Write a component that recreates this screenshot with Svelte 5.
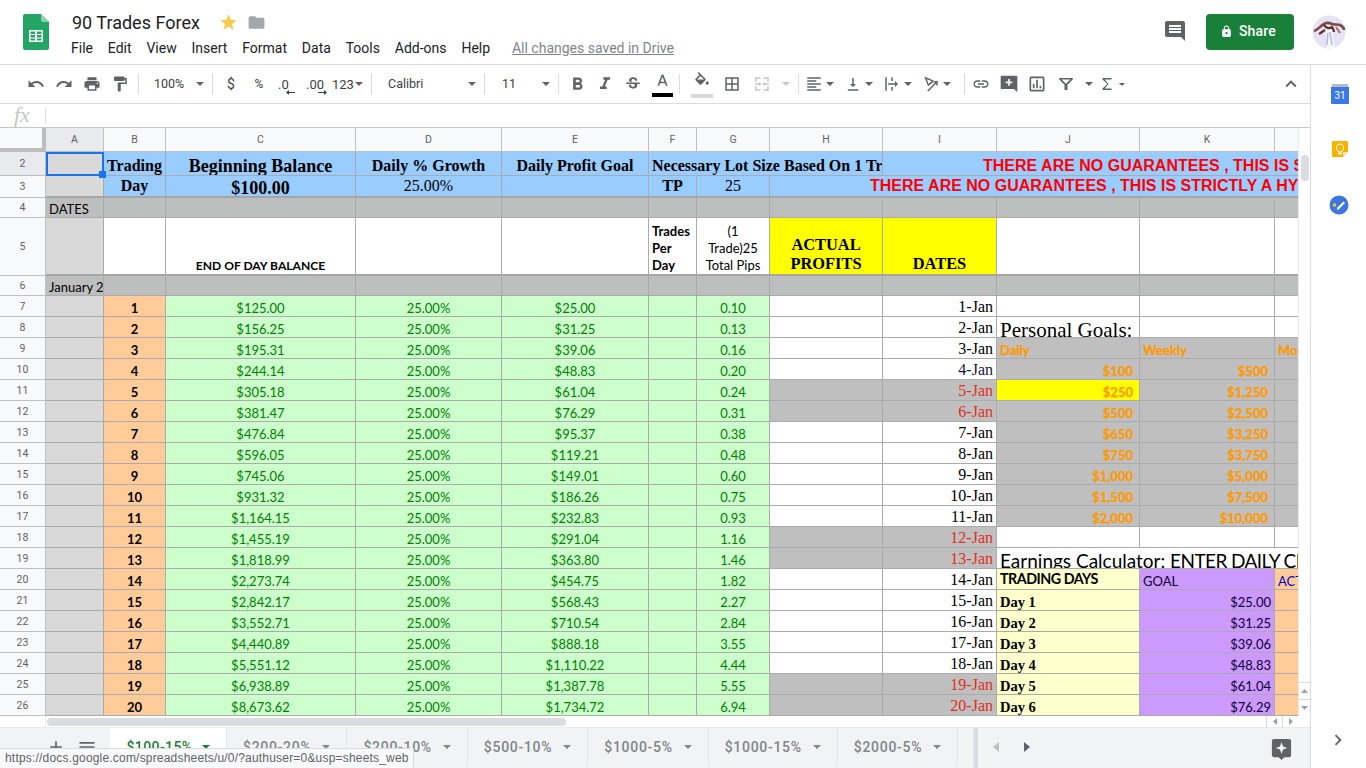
<script>
  const columns = ["A", "B", "C", "D", "E", "F", "G", "H", "I", "J", "K", ""];
  const profits = ["25.00", "31.25", "39.06", "48.83", "61.04", "76.29", "95.37", "119.21", "149.01", "186.26", "232.83", "291.04", "363.80", "454.75", "568.43", "710.54", "888.18", "1,110.22", "1,387.78", "1,734.72"];
  const balances = ["125.00", "156.25", "195.31", "244.14", "305.18", "381.47", "476.84", "596.05", "745.06", "931.32", "1,164.15", "1,455.19", "1,818.99", "2,273.74", "2,842.17", "3,552.71", "4,440.89", "5,551.12", "6,938.89", "8,673.62"];
  const lots = ["0.10", "0.13", "0.16", "0.20", "0.24", "0.31", "0.38", "0.48", "0.60", "0.75", "0.93", "1.16", "1.46", "1.82", "2.27", "2.84", "3.55", "4.44", "5.55", "6.94"];
  const weekends = [5, 6, 12, 13, 19, 20];

  const goals = [
    ["$100", "$500"], ["$250", "$1,250"], ["$500", "$2,500"], ["$650", "$3,250"],
    ["$750", "$3,750"], ["$1,000", "$5,000"], ["$1,500", "$7,500"], ["$2,000", "$10,000"]
  ];

  // right hand block of the sheet, one entry per row starting at row 7
  const side = [
    [{}, {}, {}],
    [{ text: "Personal Goals:", cls: "big" }, {}, {}],
    [{ text: "Daily", cls: "goal-head" }, { text: "Weekly", cls: "goal-head" }, { text: "Mo", cls: "goal-head" }],
    ...goals.map((g, i) => [
      { text: g[0], cls: i === 1 ? "goal-val hilite" : "goal-val" },
      { text: g[1], cls: "goal-val" },
      { cls: "gray" }
    ]),
    [{}, {}, {}],
    [{ text: "Earnings Calculator: ", caps: "ENTER DAILY CLOSING BALANCE", cls: "earn", span: 3 }],
    [{ text: "TRADING DAYS", cls: "days-head" }, { text: "GOAL", cls: "purple" }, { text: "ACT", cls: "orange act" }],
    ...profits.slice(0, 6).map((p, i) => [
      { text: "Day " + (i + 1), cls: "day" },
      { text: "$" + p, cls: "purple right" },
      { cls: "orange" }
    ])
  ];

  const days = profits.map((p, i) => ({
    n: i + 1,
    row: i + 7,
    balance: "$" + balances[i],
    profit: "$" + p,
    lot: lots[i],
    off: weekends.includes(i + 1),
    side: side[i]
  }));

  const menus = ["File", "Edit", "View", "Insert", "Format", "Data", "Tools", "Add-ons", "Help"];
  const tabs = ["$200-20%", "$200-10%", "$500-10%", "$1000-5%", "$1000-15%", "$2000-5%"];

  const paths = {
    undo: "M12.5 8c-2.65 0-5.05.99-6.9 2.6L2 7v9h9l-3.62-3.62c1.39-1.16 3.16-1.88 5.12-1.88 3.54 0 6.55 2.31 7.6 5.5l2.37-.78C21.08 11.03 17.15 8 12.5 8z",
    redo: "M18.4 10.6C16.55 8.99 14.15 8 11.5 8c-4.65 0-8.58 3.03-9.96 7.22L3.9 16c1.05-3.19 4.05-5.5 7.6-5.5 1.95 0 3.73.72 5.12 1.88L13 16h9V7l-3.6 3.6z",
    print: "M19 8H5c-1.66 0-3 1.34-3 3v6h4v4h12v-4h4v-6c0-1.66-1.34-3-3-3zm-3 11H8v-5h8v5zm3-7c-.55 0-1-.45-1-1s.45-1 1-1 1 .45 1 1-.45 1-1 1zm-1-9H6v4h12V3z",
    paint: "M18 4V3c0-.55-.45-1-1-1H5c-.55 0-1 .45-1 1v4c0 .55.45 1 1 1h12c.55 0 1-.45 1-1V6h1v4H9v11c0 .55.45 1 1 1h2c.55 0 1-.45 1-1v-9h8V4h-3z",
    bold: "M15.6 10.79c.97-.67 1.65-1.77 1.65-2.79 0-2.26-1.75-4-4-4H7v14h7.04c2.09 0 3.71-1.7 3.71-3.79 0-1.52-.86-2.82-2.15-3.42zM10 6.5h3c.83 0 1.5.67 1.5 1.5s-.67 1.5-1.5 1.5h-3v-3zm3.5 9H10v-3h3.5c.83 0 1.5.67 1.5 1.5s-.67 1.5-1.5 1.5z",
    italic: "M10 4v3h2.21l-3.42 8H6v3h8v-3h-2.21l3.42-8H18V4z",
    strike: "M7.24 8.75c-.26-.48-.39-1.03-.39-1.67 0-.61.13-1.16.4-1.67.26-.5.63-.93 1.11-1.29.48-.35 1.05-.63 1.7-.83.66-.19 1.39-.29 2.18-.29.81 0 1.54.11 2.21.34.66.22 1.23.54 1.69.94.47.4.83.88 1.08 1.43.25.55.38 1.15.38 1.81h-3.01c0-.31-.05-.59-.15-.85-.09-.27-.24-.49-.44-.68-.2-.19-.45-.33-.75-.44-.3-.1-.66-.16-1.06-.16-.39 0-.74.04-1.03.13-.29.09-.53.21-.72.36-.19.16-.34.34-.44.55-.1.21-.15.43-.15.66 0 .48.25.88.74 1.21.38.25.77.48 1.41.7H7.39c-.05-.08-.11-.17-.15-.25zM21 12v-2H3v2h9.62c.18.07.4.14.55.2.37.17.66.34.87.51.21.17.35.36.43.57.07.2.11.43.11.69 0 .23-.05.45-.14.66-.09.2-.23.38-.42.53-.19.15-.42.26-.71.35-.29.08-.63.13-1.01.13-.43 0-.83-.04-1.18-.13s-.66-.23-.91-.42c-.25-.19-.45-.44-.59-.75-.14-.31-.25-.76-.25-1.21H6.4c0 .55.08 1.13.24 1.58.16.45.37.85.65 1.21.28.35.6.66.98.92.37.26.78.48 1.22.65.44.17.9.3 1.38.39.48.08.96.13 1.44.13.8 0 1.53-.09 2.18-.28s1.21-.45 1.67-.79c.46-.34.82-.77 1.07-1.27s.38-1.07.38-1.71c0-.6-.1-1.14-.31-1.61-.05-.11-.11-.23-.17-.33H21z",
    color: "M11 2L5.500 16h2.250l1.120-3h6.250l1.120 3h2.250L13 2h-2zm-1.380 9L12 4.670 14.380 11H9.620z",
    fill: "M16.56 8.94L7.62 0 6.21 1.41l2.38 2.38-5.15 5.15c-.59.59-.59 1.54 0 2.12l5.5 5.5c.29.29.68.44 1.06.44s.77-.15 1.06-.44l5.5-5.5c.59-.58.59-1.53 0-2.12zM5.21 10L10 5.21 14.79 10H5.21zM19 11.5s-2 2.17-2 3.5c0 1.1.9 2 2 2s2-.9 2-2c0-1.33-2-3.5-2-3.5z",
    borders: "M3 3v18h18V3H3zm8 16H5v-6h6v6zm0-8H5V5h6v6zm8 8h-6v-6h6v6zm0-8h-6V5h6v6z",
    merge: "M3 3h7v2H5v4H3zM14 3h7v6h-2V5h-5zM3 15h2v4h5v2H3zM19 15h2v6h-7v-2h5zM3 11h5V9l3 3-3 3v-2H3zM21 13h-5v2l-3-3 3-3v2h5z",
    align: "M3 3h18v2H3zM3 7h12v2H3zM3 11h18v2H3zM3 15h12v2H3zM3 19h18v2H3z",
    valign: "M16 12h-3V4h-2v8H8l4 4zM5 19v2h14v-2z",
    wrap: "M3 3h2v18H3zM11 3h2v5h-2zM11 16h2v5h-2zM7 11h9V8l4 4-4 4v-3H7z",
    rotate: "M3 2l14 6-9 7zM6.500 5.800l2.200 5.800 4.500-3.300zM21 8v6h-2v-2.600L8.400 22 7 20.600 17.600 10H15V8z",
    link: "M3.9 12c0-1.71 1.39-3.1 3.1-3.1h4V7H7c-2.76 0-5 2.24-5 5s2.24 5 5 5h4v-1.9H7c-1.71 0-3.1-1.39-3.1-3.1zM8 13h8v-2H8v2zm9-6h-4v1.9h4c1.71 0 3.1 1.39 3.1 3.1s-1.39 3.1-3.1 3.1h-4V17h4c2.76 0 5-2.24 5-5s-2.24-5-5-5z",
    addcomment: "M3 2h18a1 1 0 0 1 1 1v19l-4-4H3a1 1 0 0 1-1-1V3a1 1 0 0 1 1-1zm8 4v3H8v2h3v3h2v-3h3V9h-3V6z",
    chart: "M19 3H5c-1.1 0-2 .9-2 2v14c0 1.1.9 2 2 2h14c1.1 0 2-.9 2-2V5c0-1.1-.9-2-2-2zm0 16H5V5h14v14zM7 12h2v5H7zm4-5h2v10h-2zm4 7h2v3h-2z",
    filter: "M3 4h18v2l-7 7v7h-4v-7L3 6zm3.200 2l5.800 5.800L17.800 6z",
    sigma: "M18 4H6v2l6.500 6L6 18v2h12v-2H9l5-6-5-6h9z",
    up: "M12 8l-6 6 1.41 1.41L12 10.83l4.59 4.58L18 14z",
    chat: "M21.99 4c0-1.1-.89-2-1.99-2H4c-1.1 0-2 .9-2 2v12c0 1.1.9 2 2 2h14l4 4-.01-18zM18 14H6v-2h12v2zm0-3H6V9h12v2zm0-3H6V6h12v2z",
    lock: "M18 8h-1V6c0-2.76-2.24-5-5-5S7 3.24 7 6v2H6c-1.1 0-2 .9-2 2v10c0 1.1.9 2 2 2h12c1.1 0 2-.9 2-2V10c0-1.1-.9-2-2-2zm-6 9c-1.1 0-2-.9-2-2s.9-2 2-2 2 .9 2 2-.9 2-2 2zm3.1-9H8.9V6c0-1.71 1.39-3.1 3.1-3.1 1.71 0 3.1 1.39 3.1 3.1v2z",
    star: "M12 17.27L18.18 21l-1.64-7.03L22 9.24l-7.19-.61L12 2 9.19 8.63 2 9.24l5.46 4.73L5.82 21z",
    folder: "M10 4H4c-1.1 0-2 .9-2 2v12c0 1.1.9 2 2 2h16c1.1 0 2-.9 2-2V8c0-1.1-.9-2-2-2h-8l-2-2z",
    plus: "M19 13h-6v6h-2v-6H5v-2h6V5h2v6h6z",
    list: "M3 6h18v2H3zM3 11h18v2H3zM3 16h18v2H3z",
    right: "M10 6L8.59 7.41 13.17 12l-4.58 4.59L10 18l6-6z",
    explore: "M4 2h16c1.1 0 2 .9 2 2v15c0 1.1-.9 2-2 2h-5l-3 3-3-3H4c-1.1 0-2-.9-2-2V4c0-1.1.9-2 2-2zm8 3.500l-1.600 4.400L6 11.500l4.400 1.600 1.600 4.400 1.600-4.400 4.400-1.600-4.400-1.600z"
  };
</script>

{#snippet icon(name, size = 18)}
  <svg class="ico" width={size} height={size} viewBox="0 0 24 24"><path d={paths[name]} fill-rule="evenodd" /></svg>
{/snippet}

{#snippet caret()}
  <svg class="caret" width="8" height="4" viewBox="0 0 8 4"><path d="M0 0h8L4 4z" /></svg>
{/snippet}

<div class="app">
  <header class="top">
    <svg class="logo" width="26" height="36" viewBox="0 0 26 36">
      <path d="M2 0h16l8 8v26a2 2 0 0 1-2 2H2a2 2 0 0 1-2-2V2a2 2 0 0 1 2-2z" fill="#23a566" />
      <path d="M18 0l8 8h-6a2 2 0 0 1-2-2z" fill="#8ed1b1" />
      <path d="M6 16h14v12H6z M7.500 17.500v2.500h4.500v-2.500z M14 17.500v2.500h4.500v-2.500z M7.500 21v2.500h4.500V21z M14 21v2.500h4.500V21z M7.500 24.500v2h4.500v-2z M14 24.500v2h4.500v-2z" fill="#fff" fill-rule="evenodd" />
    </svg>
    <div class="titles">
      <div class="title-row">
        <span class="doc-title">90 Trades Forex</span>
        <span class="star">{@render icon("star", 19)}</span>
        <span class="folder">{@render icon("folder", 19)}</span>
      </div>
      <nav class="menus">
        {#each menus as m}<span>{m}</span>{/each}
        <a class="saved" href="#saved">All changes saved in Drive</a>
      </nav>
    </div>
    <div class="top-right">
      <span class="chat">{@render icon("chat", 24)}</span>
      <button class="share" type="button">{@render icon("lock", 13)}<span>Share</span></button>
      <svg class="avatar" width="34" height="34" viewBox="0 0 34 34">
        <circle cx="17" cy="17" r="16.5" fill="#e4e2f3" />
        <path d="M14 15l6-1 3 19-8 0z" fill="#f6f6fc" />
        <path d="M18 17l2 13M16 18l-1 12" stroke="#b5b8d8" stroke-width="1.500" fill="none" />
        <path d="M2 16c4-1 6-5 10-7 3-2 6-1 8 0 3 1 5 0 8 1 2 1 4 3 4 5" stroke="#7e4a42" stroke-width="2.600" fill="none" />
        <path d="M12 10c2 3 5 4 8 2 1 2 2 3 2 5M7 19c2-1 4-3 6-4" stroke="#5f2f2a" stroke-width="2.200" fill="none" />
        <path d="M24 12l4 6" stroke="#a3716a" stroke-width="2" fill="none" />
      </svg>
    </div>
  </header>

  <div class="body">
    <div class="work">
      <div class="toolbar">
        <span class="btn">{@render icon("undo")}</span>
        <span class="btn">{@render icon("redo")}</span>
        <span class="btn">{@render icon("print")}</span>
        <span class="btn">{@render icon("paint")}</span>
        <i class="sep"></i>
        <span class="select zoom-sel"><span>100%</span>{@render caret()}</span>
        <i class="sep"></i>
        <span class="btn txt">$</span>
        <span class="btn txt small">%</span>
        <span class="btn txt dec dec-a">.0<svg width="9" height="5" viewBox="0 0 9 5"><path d="M9 2H3V0L0 2.500 3 5V3h6z" /></svg></span>
        <span class="btn txt dec dec-b">.00<svg width="9" height="5" viewBox="0 0 9 5"><path d="M0 2h6V0l3 2.500L6 5V3H0z" /></svg></span>
        <span class="btn txt num">123{@render caret()}</span>
        <i class="sep"></i>
        <span class="select font-sel"><span>Calibri</span>{@render caret()}</span>
        <i class="sep"></i>
        <span class="select size-sel"><span>11</span>{@render caret()}</span>
        <i class="sep"></i>
        <span class="btn">{@render icon("bold", 21)}</span>
        <span class="btn">{@render icon("italic", 20)}</span>
        <span class="btn">{@render icon("strike", 18)}</span>
        <span class="btn color">{@render icon("color", 19)}<b></b></span>
        <i class="sep sep-fill"></i>
        <span class="btn wide fill">{@render icon("fill", 18)}<b></b></span>
        <span class="btn wide">{@render icon("borders")}</span>
        <span class="btn wide off">{@render icon("merge")}</span>
        <span class="tiny off">{@render caret()}</span>
        <i class="sep"></i>
        <span class="group">{@render icon("align")}{@render caret()}</span>
        <span class="group">{@render icon("valign")}{@render caret()}</span>
        <span class="group">{@render icon("wrap")}{@render caret()}</span>
        <span class="group">{@render icon("rotate")}{@render caret()}</span>
        <i class="sep sep-link"></i>
        <span class="btn">{@render icon("link")}</span>
        <span class="btn">{@render icon("addcomment", 20)}</span>
        <span class="btn">{@render icon("chart", 20)}</span>
        <span class="btn filter">{@render icon("filter")}</span>
        <span class="tiny">{@render caret()}</span>
        <span class="group sigma">{@render icon("sigma")}<svg class="caret" width="6" height="3" viewBox="0 0 8 4"><path d="M0 0h8L4 4z" /></svg></span>
        <span class="btn collapse">{@render icon("up", 22)}</span>
      </div>

      <div class="fx-bar"><em>fx</em><i></i></div>

      <div class="sheet-top">
        <div class="viewport">
          <div class="grid">
            <div class="corner"></div>
            {#each columns as c, i}
              <div class="col-head" class:picked={i === 0}>{c}</div>
            {/each}

            <div class="row-head picked">2</div>
            <div class="cell col-a selected"><b class="handle"></b></div>
            <div class="cell blue head-16 center">Trading</div>
            <div class="cell blue head-18 center">Beginning Balance</div>
            <div class="cell blue head-16 center">Daily % Growth</div>
            <div class="cell blue head-16 center">Daily Profit Goal</div>
            <div class="cell blue head-16 lot-title span-3">Necessary Lot Size Based On 1 Trade</div>
            <div class="cell blue warn warn-a span-4">THERE ARE NO GUARANTEES , THIS IS STRICTLY A HYPOTHETICAL</div>

            <div class="row-head">3</div>
            <div class="cell col-a thick"></div>
            <div class="cell blue head-16 center thick r3">Day</div>
            <div class="cell blue head-18 center thick balance">$100.00</div>
            <div class="cell blue plain-16 center thick r3">25.00%</div>
            <div class="cell blue thick"></div>
            <div class="cell blue head-16 center thick r3">TP</div>
            <div class="cell blue plain-16 center thick r3">25</div>
            <div class="cell blue warn warn-b span-5 thick">THERE ARE NO GUARANTEES , THIS IS STRICTLY A HYPOTHETICAL</div>

            <div class="row-head">4</div>
            <div class="cell band calibri">DATES</div>
            {#each columns.slice(1) as _}<div class="cell band"></div>{/each}

            <div class="row-head">5</div>
            <div class="cell col-a thick"></div>
            <div class="cell thick"></div>
            <div class="cell thick calibri strong center eod">END OF DAY BALANCE</div>
            <div class="cell thick"></div>
            <div class="cell thick"></div>
            <div class="cell thick calibri strong wrap">Trades<br />Per<br />Day</div>
            <div class="cell thick calibri wrap center">(1<br />Trade)25<br />Total Pips</div>
            <div class="cell thick yellow head-yellow center wrap-y">ACTUAL<br />PROFITS</div>
            <div class="cell thick yellow head-yellow center">DATES</div>
            <div class="cell thick"></div>
            <div class="cell thick"></div>
            <div class="cell thick"></div>

            <div class="row-head">6</div>
            <div class="cell band calibri">January 2</div>
            {#each columns.slice(1) as _}<div class="cell band"></div>{/each}

            {#each days as d}
              <div class="row-head">{d.row}</div>
              <div class="cell col-a"></div>
              <div class="cell orange calibri strong center">{d.n}</div>
              <div class="cell green calibri center">{d.balance}</div>
              <div class="cell green calibri center">25.00%</div>
              <div class="cell green calibri center">{d.profit}</div>
              <div class="cell green"></div>
              <div class="cell green calibri center">{d.lot}</div>
              <div class="cell" class:gray={d.off}></div>
              <div class="cell date" class:gray={d.off} class:weekend={d.off} class:navy={d.n === 4}>{d.n}-Jan</div>
              {#each d.side as s}
                <div class="cell {s.cls || ''}" class:span-3={s.span === 3}>{s.text || ""}{#if s.caps}<span class="caps">{s.caps}</span>{/if}</div>
              {/each}
            {/each}
          </div>
        </div>
        <div class="vscroll">
          <div class="v-thumb"></div>
          <div class="v-arrows">
            <span><svg width="7" height="4" viewBox="0 0 7 4"><path d="M3.500 0L7 4H0z" /></svg></span>
            <span><svg width="7" height="4" viewBox="0 0 7 4"><path d="M0 0h7L3.500 4z" /></svg></span>
          </div>
        </div>
      </div>

      <div class="hscroll">
        <div class="h-side"></div>
        <div class="h-thumb"></div>
        <div class="h-arrows">
          <span><svg width="4" height="7" viewBox="0 0 4 7"><path d="M4 0v7L0 3.500z" /></svg></span>
          <span><svg width="4" height="7" viewBox="0 0 4 7"><path d="M0 0v7l4-3.500z" /></svg></span>
        </div>
      </div>

      <div class="tabs">
        <span class="tab-tool add">{@render icon("plus", 20)}</span>
        <span class="tab-tool list">{@render icon("list", 20)}</span>
        <div class="tab active"><span>$100-15%</span>{@render caret()}</div>
        {#each tabs as t}
          <div class="tab"><span>{t}</span>{@render caret()}</div>
        {/each}
        <div class="tab stub"></div>
        <div class="tab-edge"></div>
        <svg class="nav-l" width="6" height="10" viewBox="0 0 6 10"><path d="M6 0v10L0 5z" /></svg>
        <svg class="nav-r" width="6" height="10" viewBox="0 0 6 10"><path d="M0 0v10l6-5z" /></svg>
        <span class="explore">{@render icon("explore", 23)}</span>
        <div class="status">https://docs.google.com/spreadsheets/u/0/?authuser=0&amp;usp=sheets_web</div>
      </div>
    </div>

    <aside class="side">
      <svg width="18" height="20" viewBox="0 0 18 20" class="side-cal">
        <path d="M1 0h16v3H1z" fill="#b9bcc2" />
        <path d="M0 3h18v16a1 1 0 0 1-1 1H1a1 1 0 0 1-1-1z" fill="#3b78e7" />
        <text x="9" y="15" text-anchor="middle" class="cal-num">31</text>
      </svg>
      <svg width="16" height="16" viewBox="0 0 16 16" class="side-keep">
        <path d="M1 0h14a1 1 0 0 1 1 1v10l-5 5H1a1 1 0 0 1-1-1V1a1 1 0 0 1 1-1z" fill="#f5b400" />
        <path d="M16 11l-5 5v-5z" fill="#fbe3a1" />
        <path d="M8 3a3.600 3.600 0 0 0-2 6.600V11h4V9.600A3.600 3.600 0 0 0 8 3zM6.400 12h3.200v1H6.400z" fill="none" stroke="#fff" stroke-width="1" />
      </svg>
      <svg width="20" height="20" viewBox="0 0 20 20" class="side-tasks">
        <circle cx="10" cy="10" r="9.500" fill="#3c78e0" />
        <path d="M8 13l6.500-6.500 1.500 1.500L9.500 14.500H8z" fill="#fff" />
        <circle cx="5.500" cy="10" r="1.800" fill="#fbc02d" />
      </svg>
      <span class="side-open">{@render icon("right", 22)}</span>
    </aside>
  </div>
</div>

<style>
  :global(body) {
    margin: 0;
    overflow: hidden;
    background: #fff;
  }

  .app {
    width: 1366px;
    height: 768px;
    display: flex;
    flex-direction: column;
    overflow: hidden;
    font-family: Roboto, sans-serif;
    color: #3c4043;
  }

  .ico path {
    fill: #5f6368;
  }

  .caret {
    fill: #5f6368;
    flex: none;
  }

  /* title bar */
  .top {
    height: 64px;
    flex: none;
    display: flex;
    border-bottom: 1px solid #dadce0;
    box-sizing: content-box;
  }

  .logo {
    margin: 14px 0 0 23px;
  }

  .titles {
    margin-left: 22px;
  }

  .title-row {
    display: flex;
    align-items: center;
    height: 24px;
    margin-top: 10px;
  }

  .doc-title {
    font-size: 18px;
    color: #202124;
    margin-left: 1px;
    width: 147px;
  }

  .star :global(path) {
    fill: #f7cb4d;
  }

  .star :global(svg),
  .folder :global(svg) {
    display: block;
  }

  .folder {
    margin-left: 9px;
  }

  .folder :global(path) {
    fill: #a6a7aa;
  }

  .menus {
    display: flex;
    align-items: center;
    gap: 14.850px;
    font-size: 14px;
    color: #202124;
    margin-top: 4px;
    height: 20px;
  }

  .saved {
    margin-left: 7px;
    color: #80868b;
    text-decoration: underline;
  }

  .top-right {
    margin-left: auto;
    display: flex;
    align-items: flex-start;
  }

  .chat {
    margin: 19px 19px 0 0;
  }

  .share {
    width: 88px;
    height: 36px;
    margin-top: 14px;
    border: 0;
    border-radius: 4px;
    background: #188038;
    color: #fff;
    font: 500 14px Roboto, sans-serif;
    letter-spacing: 0.2px;
    display: flex;
    align-items: center;
    justify-content: center;
    gap: 6px;
    padding: 0 4px 2px 0;
  }

  .share :global(path) {
    fill: #fff;
  }

  .avatar {
    margin: 15px 20px 0 18px;
  }

  /* everything under the title bar */
  .body {
    flex: 1;
    display: flex;
    min-height: 0;
  }

  .work {
    width: 1311px;
    flex: none;
    box-sizing: border-box;
    border-right: 1px solid #dadce0;
    display: flex;
    flex-direction: column;
    position: relative;
  }

  /* toolbar */
  .toolbar {
    height: 39px;
    flex: none;
    box-sizing: border-box;
    border-bottom: 1px solid #dadce0;
    display: flex;
    align-items: center;
    padding-left: 22px;
    font-size: 13px;
    color: #5f6368;
  }

  .btn {
    width: 28px;
    height: 28px;
    flex: none;
    display: flex;
    align-items: center;
    justify-content: center;
    position: relative;
  }

  .btn.wide {
    width: 30px;
  }

  .sep {
    width: 1px;
    height: 20px;
    flex: none;
    background: #dadce0;
    margin: 0 4px;
  }

  .sep-fill {
    margin: 0 7px 0 4px;
  }

  .sep-link {
    margin: 0 2px 0 5px;
  }

  .select {
    height: 28px;
    display: flex;
    align-items: center;
    justify-content: space-between;
    box-sizing: border-box;
    flex: none;
    color: #3c4043;
    font-size: 12.500px;
  }

  .select span {
    margin-top: -2px;
  }

  .zoom-sel {
    width: 65px;
    padding: 0 4px 0 11px;
  }

  .font-sel {
    width: 104px;
    padding: 0 4px 0 12px;
  }

  .size-sel {
    width: 65px;
    padding: 0 4px 0 13px;
  }

  .txt {
    color: #3c4043;
    font-size: 14px;
  }

  .txt.small {
    font-size: 12px;
  }

  .dec {
    flex-direction: column;
    align-items: flex-start;
    box-sizing: border-box;
    font-size: 13px;
    line-height: 13px;
    padding-left: 5px;
  }

  .dec svg {
    fill: #3c4043;
    margin: -1px 0 -5px 8px;
  }

  .dec-b svg {
    margin-left: 12px;
  }

  .num {
    width: 38px;
    font-size: 13px;
    justify-content: flex-start;
    padding-left: 3px;
    box-sizing: border-box;
    gap: 1px;
  }

  .color b {
    position: absolute;
    left: 5px;
    right: 2px;
    bottom: 1px;
    height: 4px;
    background: #000;
  }

  .color :global(svg) {
    margin: -4px 0 0 2px;
  }

  .fill b {
    position: absolute;
    left: 4px;
    right: 4px;
    bottom: 0;
    height: 4px;
    background: #d9d9d9;
  }

  .fill :global(svg) {
    margin-top: -6px;
  }

  .off :global(path),
  .off.tiny :global(svg) {
    fill: #c4c7c9;
  }

  .tiny {
    width: 17px;
    flex: none;
    display: flex;
    align-items: center;
    justify-content: center;
  }

  .group {
    width: 39px;
    flex: none;
    display: flex;
    align-items: center;
    box-sizing: border-box;
    padding-left: 2px;
    gap: 3px;
  }

  .filter {
    margin-left: 1px;
  }

  .sigma {
    margin-left: -1px;
  }

  .collapse {
    margin-left: auto;
    margin-right: 5px;
  }

  /* formula bar */
  .fx-bar {
    height: 24px;
    flex: none;
    box-sizing: border-box;
    display: flex;
    align-items: center;
    border-bottom: 1px solid #c7c7c7;
  }

  .fx-bar em {
    font: italic 22px "Liberation Serif", serif;
    color: #c4c7c9;
    width: 31px;
    margin: -2px 0 0 14px;
  }

  .fx-bar i {
    width: 1px;
    height: 16px;
    background: #dadce0;
  }

  /* the sheet */
  .sheet-top {
    height: 588px;
    flex: none;
    display: flex;
  }

  .viewport {
    width: 1298px;
    flex: none;
    overflow: hidden;
  }

  .grid {
    display: grid;
    grid-template-columns: 46px 58px 62px 190px 146px 147px 48px 73px 113px 114px 143px 135px 60px;
    grid-template-rows: 24px 24px 22px 20px 58px 20px repeat(20, 21px);
    width: 1435px;
  }

  .corner {
    background: #f8f9fa;
    box-sizing: border-box;
    border-right: 4px solid #bdbdbd;
    border-bottom: 4px solid #bdbdbd;
  }

  .col-head,
  .row-head {
    background: #f8f9fa;
    color: #5f6368;
    font-size: 10.500px;
    display: flex;
    align-items: center;
    justify-content: center;
    box-sizing: border-box;
    border-right: 1px solid #c0c0c0;
    border-bottom: 1px solid #c0c0c0;
  }

  .col-head.picked,
  .row-head.picked {
    background: #e8eaed;
  }

  .cell {
    box-sizing: border-box;
    border-right: 1px solid #ababab;
    border-bottom: 1px solid #ababab;
    overflow: hidden;
    white-space: nowrap;
    display: flex;
    align-items: flex-end;
    padding: 0 3px;
    min-width: 0;
    position: relative;
    font-family: "Liberation Serif", serif;
    color: #000;
  }

  .center {
    justify-content: center;
    padding: 0 1px;
  }

  .thick {
    border-bottom: 2px solid #a6a6a6;
  }

  .span-3 {
    grid-column: span 3;
  }

  .span-4 {
    grid-column: span 4;
  }

  .span-5 {
    grid-column: span 5;
  }

  .calibri {
    font-family: Lato, sans-serif;
    font-size: 13px;
    line-height: 16px;
  }

  .strong {
    font-weight: 700;
  }

  .eod {
    font-size: 12.100px;
    line-height: 17px;
  }

  .wrap {
    display: block;
    align-self: end;
    white-space: nowrap;
    line-height: 17px;
    padding-top: 5px;
  }

  .wrap.center {
    text-align: center;
  }

  .col-a {
    background: #d9d9d9;
  }

  .blue {
    background: #99ccff;
  }

  .band {
    background: #bdbfbe;
  }

  .gray {
    background: #bfbfbf;
  }

  .orange {
    background: #ffcc99;
  }

  .green {
    background: #ccffcc;
  }

  .green.calibri {
    color: #008000;
  }

  .yellow {
    background: #ffff00;
  }

  .purple {
    background: #cc99ff;
    font-family: Lato, sans-serif;
    font-size: 13px;
    line-height: 15px;
    color: #0d0033;
  }

  .right {
    justify-content: flex-end;
  }

  .head-16 {
    font-size: 16px;
    font-weight: 700;
    line-height: 19px;
  }

  .head-18 {
    font-size: 18px;
    font-weight: 700;
    line-height: 17px;
  }

  .head-yellow {
    font-size: 16.400px;
    font-weight: 700;
    line-height: 19px;
    padding-bottom: 1px;
  }

  .wrap-y {
    text-align: center;
    align-items: flex-end;
  }

  .plain-16 {
    font-size: 16px;
    line-height: 19px;
  }

  .r3 {
    padding-bottom: 1px;
  }

  .balance {
    line-height: 15px;
  }

  .lot-title {
    padding-left: 3px;
  }

  .warn {
    font: 700 16px "Liberation Sans", sans-serif;
    color: #ff0000;
  }

  .warn-a {
    padding-left: 100px;
    line-height: 18px;
  }

  .warn-b {
    padding-left: 100px;
    line-height: 20px;
  }

  .selected {
    overflow: visible;
    outline: 2px solid #1a73e8;
    outline-offset: -2px;
  }

  .handle {
    position: absolute;
    right: -3px;
    bottom: -3px;
    width: 7px;
    height: 7px;
    background: #1a73e8;
    z-index: 2;
  }

  .date {
    justify-content: flex-end;
    font-size: 16px;
    line-height: 19px;
  }

  .weekend {
    color: #e0301e;
  }

  .navy {
    color: #20124d;
  }

  .big {
    font-size: 21px;
    line-height: 24px;
    align-items: flex-start;
    padding-top: 1px;
    overflow: visible;
  }

  .goal-head,
  .goal-val {
    background: #bfbfbf;
    font-family: Lato, sans-serif;
    font-size: 13px;
    font-weight: 700;
    color: #ff9900;
    -webkit-text-stroke: 0.25px #ff9900;
  }

  .goal-head {
    line-height: 15px;
  }

  .goal-val {
    justify-content: flex-end;
    line-height: 15px;
    padding-right: 6px;
  }

  .goal-val.hilite {
    background: #ffff00;
  }

  .earn {
    display: block;
    font-family: Lato, sans-serif;
    font-size: 19px;
    line-height: 24px;
    padding-top: 1px;
  }

  .caps {
    letter-spacing: -0.6px;
  }

  .days-head {
    background: #ffffcc;
    font-family: Lato, sans-serif;
    font-size: 14.300px;
    font-weight: 700;
    letter-spacing: -0.5px;
    line-height: 20px;
  }

  .day {
    background: #ffffcc;
    font-size: 14.500px;
    font-weight: 700;
    line-height: 16px;
  }

  .act {
    font-family: Lato, sans-serif;
    font-size: 13px;
    line-height: 15px;
    color: #0000cc;
  }

  /* scrollbars */
  .vscroll {
    flex: 1;
    position: relative;
    background: #fff;
    border-left: 1px solid #e8eaed;
  }

  .v-thumb {
    position: absolute;
    left: 2px;
    top: 27px;
    width: 8px;
    height: 26px;
    background: #dadce0;
    border-radius: 4px;
  }

  .v-arrows {
    position: absolute;
    bottom: 0;
    left: 0;
    right: 0;
  }

  .v-arrows span {
    height: 16px;
    display: flex;
    align-items: center;
    justify-content: center;
    border-top: 1px solid #dadce0;
  }

  .v-arrows svg,
  .h-arrows svg {
    fill: #9aa0a6;
  }

  .hscroll {
    height: 12px;
    flex: none;
    display: flex;
    align-items: center;
    background: #fff;
    border-bottom: 1px solid #e8eaed;
    box-sizing: border-box;
  }

  .h-side {
    width: 45px;
    height: 12px;
    border-right: 1px solid #e8eaed;
    flex: none;
  }

  .h-thumb {
    width: 519px;
    height: 8px;
    margin-left: 1px;
    background: #dadce0;
    border-radius: 4px;
  }

  .h-arrows {
    margin-left: auto;
    margin-right: 12px;
    display: flex;
  }

  .h-arrows span {
    width: 16px;
    height: 11px;
    display: flex;
    align-items: center;
    justify-content: center;
    border-left: 1px solid #dadce0;
    box-sizing: border-box;
  }

  /* sheet tabs */
  .tabs {
    flex: 1;
    display: flex;
    background: #f1f3f4;
    padding-left: 110px;
    position: relative;
    min-height: 0;
  }

  .tab-tool {
    position: absolute;
    top: 9px;
  }

  .tab-tool.add {
    left: 46px;
  }

  .tab-tool.list {
    left: 77px;
  }

  .tab {
    height: 38px;
    flex: none;
    display: flex;
    align-items: center;
    justify-content: center;
    gap: 11px;
    box-sizing: border-box;
    border-right: 1px solid #e3e5e8;
    font-size: 14px;
    font-weight: 500;
    letter-spacing: 0.7px;
    color: #80868b;
    padding: 0 16px;
    white-space: nowrap;
  }

  .tab .caret {
    fill: #80868b;
  }

  .tab.active {
    width: 117px;
    background: #fff;
    color: #188038;
    padding: 0;
    gap: 9px;
    letter-spacing: 0.4px;
  }

  .tab.active .caret {
    fill: #188038;
  }

  .tab.stub {
    width: 16px;
    padding: 0;
  }

  .tab-edge {
    width: 4px;
    height: 40px;
    background: #dadce0;
    flex: none;
  }

  .nav-l,
  .nav-r {
    position: absolute;
    top: 14px;
  }

  .nav-l {
    left: 993px;
    fill: #bdc1c6;
  }

  .nav-r {
    left: 1024px;
    fill: #5f6368;
  }

  .explore {
    position: absolute;
    left: 1270px;
    top: 9px;
  }

  .status {
    position: absolute;
    left: 0;
    bottom: 0;
    width: 414px;
    height: 20px;
    box-sizing: border-box;
    background: #f8f9fa;
    border-top: 1px solid #dadce0;
    border-right: 1px solid #dadce0;
    padding-left: 5px;
    font: 12px/19px "Liberation Sans", sans-serif;
    letter-spacing: 0.19px;
    color: #5f6368;
    white-space: nowrap;
    z-index: 3;
  }

  /* side panel */
  .side {
    flex: 1;
    position: relative;
  }

  .side svg {
    position: absolute;
  }

  .side-cal {
    left: 20px;
    top: 19px;
  }

  .side-keep {
    left: 21px;
    top: 76px;
  }

  .side-tasks {
    left: 18px;
    top: 130px;
  }

  .side-open {
    position: absolute;
    left: 16px;
    top: 664px;
  }

  .cal-num {
    font: 10px Roboto, sans-serif;
    fill: #fff;
  }
</style>
